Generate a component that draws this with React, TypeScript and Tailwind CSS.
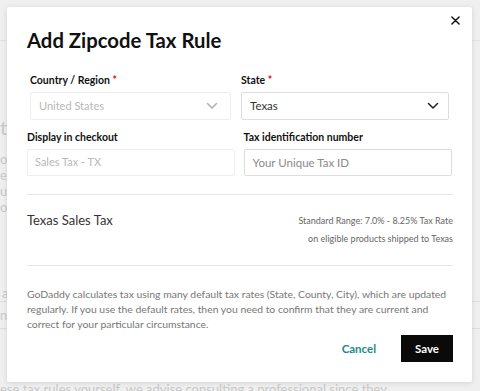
import React from "react";

function Chevron({ color }: { color: string }) {
  return (
    <svg width="12" height="8" viewBox="0 0 12 8" fill="none">
      <path d="M1.5 1.5 L6 6 L10.5 1.5" stroke={color} strokeWidth="1.5" strokeLinecap="round" strokeLinejoin="round" />
    </svg>
  );
}

export default function App() {
  return (
    <div className="relative w-[480px] h-[391px] overflow-hidden bg-[#efefef]" style={{ fontFamily: "Lato, 'Noto Sans', sans-serif" }}>
      {/* background page (dimmed) */}
      <div className="absolute inset-0 text-[#c9c9c9] text-[13px]">
        <div className="absolute left-0 right-0 top-[40px] h-px bg-[#e2e2e2]" />
        <div className="absolute left-0 right-0 top-[301px] h-px bg-[#dedede]" />
        <div className="absolute left-0 right-0 top-[328px] h-px bg-[#dedede]" />
        <div className="absolute left-0 top-[112px] text-[20px]">t</div>
        <div className="absolute left-0 top-[150px]">o</div>
        <div className="absolute left-0 top-[166px]">e</div>
        <div className="absolute left-0 top-[182px]">u</div>
        <div className="absolute left-0 top-[198px]">or</div>
        <div className="absolute left-[2px] top-[284px]">a</div>
        <div className="absolute left-0 top-[306px]">nt</div>
        <div className="absolute left-0 top-[380px] whitespace-nowrap text-[13px]">ese tax rules yourself, we advise consulting a professional since they</div>
      </div>

      {/* modal */}
      <div className="absolute left-[7px] top-[7px] w-[465px] h-[375px] bg-white rounded-[2px] shadow-[0_1px_5px_rgba(0,0,0,0.12)] px-[20px] pt-[20px]">
        <button className="absolute right-[9px] top-[5px] w-[16px] h-[16px] flex items-center justify-center">
          <svg width="9" height="9" viewBox="0 0 10 10">
            <path d="M1 1 L9 9 M9 1 L1 9" stroke="#111" strokeWidth="1.6" strokeLinecap="round" />
          </svg>
        </button>

        <h1 className="text-[20.3px] leading-[26px] font-bold text-[#111]">Add Zipcode Tax Rule</h1>

        <div className="mt-[20px] flex gap-[10px] pl-[3px]">
          <div className="w-[201px]">
            <div className="text-[10.5px] leading-[14px] font-bold text-[#111]">
              Country / Region <span className="text-[#e20000]">*</span>
            </div>
            <div className="mt-[5px] h-[28px] border border-[#eeeeee] rounded-[2px] flex items-center justify-between pl-[8px] pr-[12px]">
              <span className="text-[11px] text-[#b8b8b8]">United States</span>
              <Chevron color="#b0b0b0" />
            </div>
          </div>
          <div className="w-[208px]">
            <div className="text-[10.5px] leading-[14px] font-bold text-[#111]">
              State <span className="text-[#e20000]">*</span>
            </div>
            <div className="mt-[5px] h-[28px] border border-[#dddddd] rounded-[2px] flex items-center justify-between pl-[8px] pr-[9px]">
              <span className="text-[11.5px] text-[#333]">Texas</span>
              <Chevron color="#222" />
            </div>
          </div>
        </div>

        <div className="mt-[10px] flex gap-[9px]">
          <div className="w-[208px]">
            <div className="text-[10.5px] leading-[14px] font-bold text-[#111]">Display in checkout</div>
            <div className="mt-[5px] h-[27px] border border-[#eeeeee] rounded-[2px] flex items-center pl-[7px]">
              <span className="text-[11px] text-[#b8b8b8]">Sales Tax - TX</span>
            </div>
          </div>
          <div className="w-[209px]">
            <div className="text-[10.5px] leading-[14px] font-bold text-[#111]">Tax identification number</div>
            <div className="mt-[5px] h-[27px] border border-[#dddddd] rounded-[2px] flex items-center pl-[8px]">
              <span className="text-[11.5px] text-[#8a8a8a]">Your Unique Tax ID</span>
            </div>
          </div>
        </div>

        <div className="mt-[18px] h-px bg-[#e6e6e6] w-[426px]" />

        <div className="mt-[16px] flex justify-between w-[426px]">
          <div className="text-[13px] leading-[18px] text-[#333]">Texas Sales Tax</div>
          <div className="text-right text-[9px] leading-[18px] text-[#666] pt-[1px]">
            <div>Standard Range: 7.0% - 8.25% Tax Rate</div>
            <div>on eligible products shipped to Texas</div>
          </div>
        </div>

        <div className="mt-[17px] h-px bg-[#e6e6e6] w-[426px]" />

        <p className="mt-[21px] w-[430px] text-[10.4px] leading-[15px] text-[#777]">
          GoDaddy calculates tax using many default tax rates (State, County, City), which are updated regularly. If you use the default rates, then you need to confirm that they are current and correct for your particular circumstance.
        </p>

        <div className="mt-[3px] flex justify-end items-center w-[426px] gap-[25px]">
          <button className="text-[11.5px] font-bold text-[#1b8a8d]">Cancel</button>
          <button className="w-[52px] h-[27px] bg-[#0a0a0a] text-white text-[11.5px] font-bold">Save</button>
        </div>
      </div>
    </div>
  );
}
